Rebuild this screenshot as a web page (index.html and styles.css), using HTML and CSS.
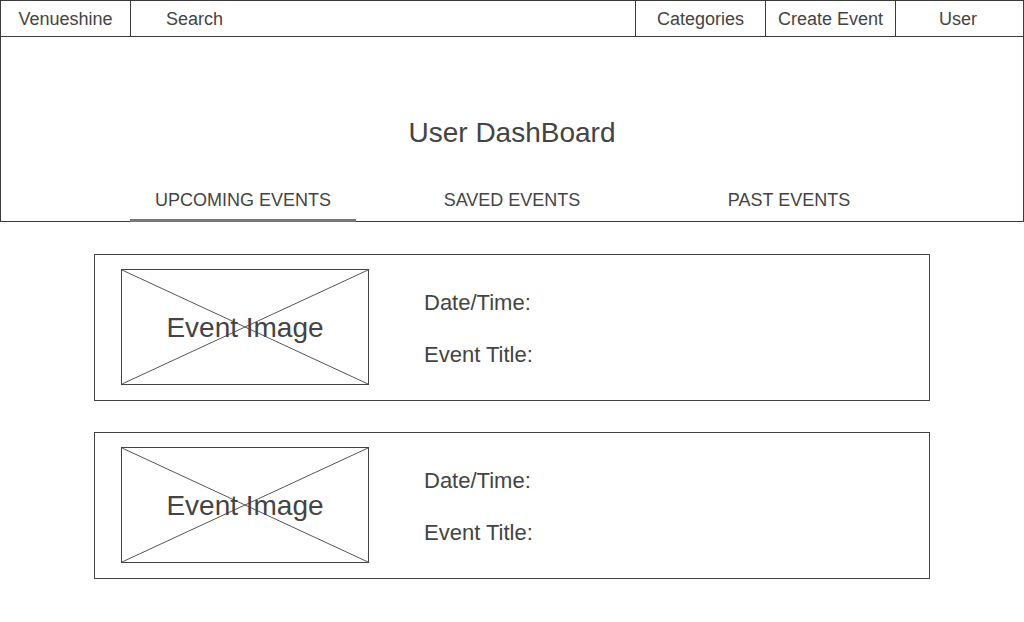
FILE: index.html
```html
<!DOCTYPE html>
<html>
<head>
<meta charset="utf-8">
<link rel="stylesheet" href="styles.css">
</head>
<body>
<nav class="nav">
  <div class="nav-item brand">Venueshine</div>
  <div class="nav-item search">Search</div>
  <div class="nav-item fixed">Categories</div>
  <div class="nav-item fixed">Create Event</div>
  <div class="nav-item user">User</div>
</nav>
<header class="header">
  <h1 class="title">User DashBoard</h1>
  <div class="tabs">
    <div class="tab tab-1 active">UPCOMING EVENTS</div>
    <div class="tab tab-2">SAVED EVENTS</div>
    <div class="tab tab-3">PAST EVENTS</div>
  </div>
</header>
<main class="list">
  <div class="card">
    <div class="image">
      <svg class="xmark" viewBox="0 0 100 100" preserveAspectRatio="none"><line x1="0" y1="0" x2="100" y2="100" vector-effect="non-scaling-stroke"/><line x1="100" y1="0" x2="0" y2="100" vector-effect="non-scaling-stroke"/></svg>
      <span class="image-label">Event Image</span>
    </div>
    <div class="info">
      <div class="line">Date/Time:</div>
      <div class="line">Event Title:</div>
    </div>
  </div>
  <div class="card">
    <div class="image">
      <svg class="xmark" viewBox="0 0 100 100" preserveAspectRatio="none"><line x1="0" y1="0" x2="100" y2="100" vector-effect="non-scaling-stroke"/><line x1="100" y1="0" x2="0" y2="100" vector-effect="non-scaling-stroke"/></svg>
      <span class="image-label">Event Image</span>
    </div>
    <div class="info">
      <div class="line">Date/Time:</div>
      <div class="line">Event Title:</div>
    </div>
  </div>
</main>
</body>
</html>
```
FILE: styles.css
```css
* { box-sizing: border-box; }
html, body { margin: 0; padding: 0; background: #fff; }
body {
  font-family: "Liberation Sans", Arial, sans-serif;
  color: #444;
  width: 1024px;
}
.nav {
  display: flex;
  height: 37px;
  border: 1px solid #3a3a3a;
}
.nav-item {
  font-size: 18px;
  line-height: 33px;
  padding-top: 2px;
  height: 35px;
  border-right: 1px solid #3a3a3a;
  text-align: center;
}
.brand { width: 130px; }
.search { flex: 1; text-align: left; padding-left: 35px; }
.fixed { width: 130px; }
.user { width: 127px; border-right: none; padding-right: 3px; }

.header {
  display: flex;
  flex-direction: column;
  height: 185px;
  border: 1px solid #3a3a3a;
  border-top: none;
  padding-top: 80px;
}
.title {
  margin: 0;
  font-weight: normal;
  font-size: 28px;
  line-height: 32px;
  text-align: center;
  color: #444;
}
.tabs {
  display: flex;
  margin-top: 40px;
  margin-bottom: -1px;
  padding-left: 129px;
}
.tab {
  font-size: 18px;
  line-height: 22px;
  padding-bottom: 8px;
  border-bottom: 3px solid transparent;
  text-align: center;
}
.tab-1 { width: 226px; }
.tab-2 { width: 312px; }
.tab-3 { width: 242px; }
.tab.active { border-bottom-color: #777; }

.list {
  padding-top: 32px;
  padding-left: 94px;
  display: flex;
  flex-direction: column;
  gap: 31px;
}
.card {
  width: 836px;
  height: 147px;
  border: 1px solid #444;
  display: flex;
  padding: 14px 26px 15px 26px;
}
.image {
  position: relative;
  width: 248px;
  height: 116px;
  border: 1px solid #444;
  display: flex;
  align-items: center;
  justify-content: center;
}
.xmark {
  position: absolute;
  left: 0;
  top: 0;
  width: 100%;
  height: 100%;
}
.xmark line { stroke: #555; stroke-width: 1; }
.image-label {
  position: relative;
  font-size: 28px;
  line-height: 32px;
  padding-top: 2px;
  color: #444;
}
.info {
  margin-left: 55px;
  margin-top: 21px;
  display: flex;
  flex-direction: column;
  gap: 26px;
}
.line {
  font-size: 22px;
  line-height: 26px;
}
```
